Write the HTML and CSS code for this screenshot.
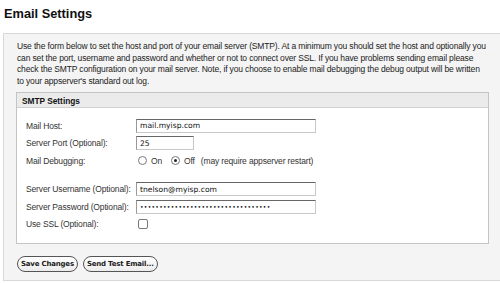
FILE: index.html
```html
<!DOCTYPE html>
<html lang="en">
<head>
  <meta charset="UTF-8" />
  <title>Email Settings</title>
  <link rel="stylesheet" href="styles.css">
</head>
<body>

  <h1 class="page-title">Email Settings</h1>

  <div class="panel">
    <p class="intro">
      Use the form below to set the host and port of your email server (SMTP). At a minimum you should set the host and optionally you<br>
      can set the port, username and password and whether or not to connect over SSL. If you have problems sending email please<br>
      check the SMTP configuration on your mail server. Note, if you choose to enable mail debugging the debug output will be written<br>
      to your appserver's standard out log.
    </p>

    <div class="box">
      <div class="box-head">SMTP Settings</div>
      <div class="box-body">
        <div class="row">
          <label for="host">Mail Host:</label>
          <input type="text" id="host" class="field wide" value="mail.myisp.com">
        </div>
        <div class="row">
          <label for="port">Server Port (Optional):</label>
          <input type="text" id="port" class="field short" value="25">
        </div>
        <div class="row">
          <label>Mail Debugging:</label>
          <div class="radios">
            <span class="radio"></span> On
            <span class="radio checked"></span> Off
            <span class="note">(may require appserver restart)</span>
          </div>
        </div>
        <div class="row spaced">
          <label for="user">Server Username (Optional):</label>
          <input type="text" id="user" class="field wide" value="tnelson@myisp.com">
        </div>
        <div class="row">
          <label for="pass">Server Password (Optional):</label>
          <input type="text" id="pass" class="field wide dots" value="••••••••••••••••••••••••••••••••••">
        </div>
        <div class="row">
          <label>Use SSL (Optional):</label>
          <span class="check"></span>
        </div>
      </div>
    </div>

    <div class="actions">
      <button>Save Changes</button>
      <button>Send Test Email...</button>
    </div>
  </div>

</body>
</html>
```

FILE: styles.css
```css
body {
  margin: 0;
  background: #fff;
  font-family: "Liberation Sans", Arial, sans-serif;
  color: #222;
}

.page-title {
  margin: 0;
  padding: 6px 0 0 4px;
  height: 27px;
  box-sizing: border-box;
  font-size: 12.8px;
  font-weight: bold;
  color: #111;
}

.panel {
  margin: 6px 0 0 3px;
  height: 248px;
  box-sizing: border-box;
  background: #f4f4f4;
  border: 1px solid #d8d8d8;
  border-right: none;
  padding: 7px 0 0 12px;
}

.intro {
  margin: 0 0 5px 1px;
  white-space: nowrap;
  font-size: 8.5px;
  line-height: 11.5px;
  letter-spacing: -0.15px;
  color: #222;
}

.box {
  width: 473px;
  box-sizing: border-box;
  background: #fff;
  border: 1px solid #c4c4c4;
}

.box-head {
  height: 15px;
  box-sizing: border-box;
  padding: 3px 0 0 5px;
  background: #ebebeb;
  border-bottom: 1px solid #d2d2d2;
  font-size: 8.3px;
  font-weight: bold;
  color: #111;
}

.box-body {
  padding: 9px 0 10px 9px;
}

.row {
  display: flex;
  align-items: center;
  height: 17.5px;
}

.row.spaced {
  margin-top: 11px;
}

.row label {
  width: 110px;
  font-size: 8.5px;
  letter-spacing: -0.15px;
  color: #333;
}

.field {
  height: 14px;
  box-sizing: border-box;
  padding: 0 3px;
  border: 1px solid #c8c8c8;
  border-top-color: #666;
  border-left-color: #999;
  font-family: "DejaVu Sans", Verdana, sans-serif;
  font-size: 7.6px;
  color: #111;
}

.field.wide {
  width: 180px;
}

.field.short {
  width: 58px;
}

.field.dots {
  font-size: 6px;
  letter-spacing: 0.3px;
}

.radios {
  display: flex;
  align-items: center;
  font-size: 8.5px;
  letter-spacing: -0.15px;
  color: #333;
}

.radio {
  width: 9px;
  height: 9px;
  box-sizing: border-box;
  border: 1px solid #777;
  border-radius: 50%;
  margin: 0 4px 0 2px;
  position: relative;
}

.radios .radio.checked {
  margin-left: 9px;
}

.radio.checked::after {
  content: "";
  position: absolute;
  left: 2px;
  top: 2px;
  width: 3px;
  height: 3px;
  border-radius: 50%;
  background: #222;
}

.note {
  margin-left: 6px;
}

.check {
  width: 8px;
  height: 8px;
  margin-left: 2px;
  border: 1px solid #777;
  border-radius: 2px;
}

.actions {
  display: flex;
  gap: 5px;
  margin-top: 12px;
  margin-left: 1px;
}

.actions button {
  height: 16px;
  padding: 0 3px;
  background: linear-gradient(#fff, #ececec);
  border: 1px solid #555;
  border-radius: 8px;
  font-family: "DejaVu Sans", Verdana, sans-serif;
  font-size: 7px;
  font-weight: bold;
  letter-spacing: -0.2px;
  color: #222;
}
```
